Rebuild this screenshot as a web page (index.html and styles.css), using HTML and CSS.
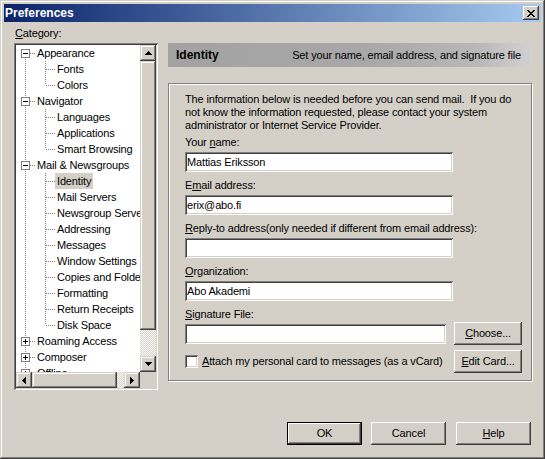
FILE: index.html
```html
<!DOCTYPE html>
<html>
<head>
<meta charset="utf-8">
<title>Preferences</title>
<link rel="stylesheet" href="styles.css">
</head>
<body>
<div class="window">
  <div class="titlebar">
    <span class="title">Preferences</span>
    <button class="close" aria-label="Close">
      <svg width="8" height="7" viewBox="0 0 8 7" shape-rendering="crispEdges"><path d="M0 0h2v1h-2zM6 0h2v1h-2zM1 1h2v1h-2zM5 1h2v1h-2zM2 2h4v1h-4zM3 3h2v1h-2zM2 4h4v1h-4zM1 5h2v1h-2zM5 5h2v1h-2zM0 6h2v1h-2zM6 6h2v1h-2z" fill="#000"/></svg>
    </button>
  </div>

  <div class="main">
    <div class="left">
      <div class="cat"><u>C</u>ategory:</div>
      <div class="tree">
        <div class="list">
          <div class="row first"><span class="g g-box"><span class="box minus"></span></span><span class="lbl">Appearance</span></div>
          <div class="row"><span class="g g-v"></span><span class="g g-t"></span><span class="lbl">Fonts</span></div>
          <div class="row"><span class="g g-v"></span><span class="g g-l"></span><span class="lbl">Colors</span></div>
          <div class="row"><span class="g g-box"><span class="box minus"></span></span><span class="lbl">Navigator</span></div>
          <div class="row"><span class="g g-v"></span><span class="g g-t"></span><span class="lbl">Languages</span></div>
          <div class="row"><span class="g g-v"></span><span class="g g-t"></span><span class="lbl">Applications</span></div>
          <div class="row"><span class="g g-v"></span><span class="g g-l"></span><span class="lbl">Smart Browsing</span></div>
          <div class="row"><span class="g g-box"><span class="box minus"></span></span><span class="lbl">Mail &amp; Newsgroups</span></div>
          <div class="row"><span class="g g-v"></span><span class="g g-t"></span><span class="lbl sel">Identity</span></div>
          <div class="row"><span class="g g-v"></span><span class="g g-t"></span><span class="lbl">Mail Servers</span></div>
          <div class="row"><span class="g g-v"></span><span class="g g-t"></span><span class="lbl">Newsgroup Servers</span></div>
          <div class="row"><span class="g g-v"></span><span class="g g-t"></span><span class="lbl">Addressing</span></div>
          <div class="row"><span class="g g-v"></span><span class="g g-t"></span><span class="lbl">Messages</span></div>
          <div class="row"><span class="g g-v"></span><span class="g g-t"></span><span class="lbl">Window Settings</span></div>
          <div class="row"><span class="g g-v"></span><span class="g g-t"></span><span class="lbl">Copies and Folders</span></div>
          <div class="row"><span class="g g-v"></span><span class="g g-t"></span><span class="lbl">Formatting</span></div>
          <div class="row"><span class="g g-v"></span><span class="g g-t"></span><span class="lbl">Return Receipts</span></div>
          <div class="row"><span class="g g-v"></span><span class="g g-l"></span><span class="lbl">Disk Space</span></div>
          <div class="row"><span class="g g-box"><span class="box plus"></span></span><span class="lbl">Roaming Access</span></div>
          <div class="row"><span class="g g-box"><span class="box plus"></span></span><span class="lbl">Composer</span></div>
          <div class="row"><span class="g g-box"><span class="box plus"></span></span><span class="lbl">Offline</span></div>
        </div>
        <div class="vscroll">
          <span class="sbtn"><svg width="7" height="4" viewBox="0 0 7 4" shape-rendering="crispEdges"><path d="M3 0h1v1h-1zM2 1h3v1h-3zM1 2h5v1h-5zM0 3h7v1h-7z" fill="#000"/></svg></span>
          <span class="vthumb"></span>
          <span class="vtrack"></span>
          <span class="sbtn"><svg width="7" height="4" viewBox="0 0 7 4" shape-rendering="crispEdges"><path d="M0 0h7v1h-7zM1 1h5v1h-5zM2 2h3v1h-3zM3 3h1v1h-1z" fill="#000"/></svg></span>
        </div>
        <div class="hscroll">
          <span class="sbtn"><svg width="4" height="7" viewBox="0 0 4 7" shape-rendering="crispEdges"><path d="M3 0h1v7h-1zM2 1h1v5h-1zM1 2h1v3h-1zM0 3h1v1h-1z" fill="#000"/></svg></span>
          <span class="hthumb"></span>
          <span class="htrack"></span>
          <span class="sbtn"><svg width="4" height="7" viewBox="0 0 4 7" shape-rendering="crispEdges"><path d="M0 0h1v7h-1zM1 1h1v5h-1zM2 2h1v3h-1zM3 3h1v1h-1z" fill="#000"/></svg></span>
        </div>
        <div class="corner"></div>
      </div>
    </div>

    <div class="right">
      <div class="banner">
        <span class="banner-title">Identity</span>
        <span class="banner-desc">Set your name, email address, and signature file</span>
      </div>
      <div class="group">
        <p class="intro">The information below is needed before you can send mail.&nbsp; If you do<br>not know the information requested, please contact your system<br>administrator or Internet Service Provider.</p>
        <div class="field field-first">
          <label class="flabel">Your <u>n</u>ame:</label>
          <input class="text" type="text" value="Mattias Eriksson">
        </div>
        <div class="field">
          <label class="flabel">E<u>m</u>ail address:</label>
          <input class="text" type="text" value="erix@abo.fi">
        </div>
        <div class="field">
          <label class="flabel"><u>R</u>eply-to address(only needed if different from email address):</label>
          <input class="text" type="text" value="">
        </div>
        <div class="field">
          <label class="flabel"><u>O</u>rganization:</label>
          <input class="text" type="text" value="Abo Akademi">
        </div>
        <div class="field">
          <label class="flabel"><u>S</u>ignature File:</label>
          <div class="sigrow">
            <input class="text sig" type="text" value="">
            <button class="btn small"><u>C</u>hoose...</button>
          </div>
        </div>
        <div class="checkrow">
          <label class="checklabel"><span class="check"></span><span><u>A</u>ttach my personal card to messages (as a vCard)</span></label>
          <button class="btn small"><u>E</u>dit Card...</button>
        </div>
      </div>
    </div>
  </div>

  <div class="footer">
    <button class="btn wide default">OK</button>
    <button class="btn wide">Cancel</button>
    <button class="btn wide help"><u>H</u>elp</button>
  </div>
</div>
</body>
</html>
```

FILE: styles.css
```css
* { box-sizing: border-box; }
html, body { margin: 0; padding: 0; }
body {
  background: #d4d0c8;
  font: 11px/13px "Liberation Sans", Arial, sans-serif;
  letter-spacing: -0.15px;
  color: #000;
}
u { text-decoration: underline; text-underline-offset: 1px; }

.window {
  width: 545px;
  height: 459px;
  padding: 4px;
  background: #d4d0c8;
  box-shadow: inset -1px -1px #404040, inset 1px 1px #d4d0c8, inset -2px -2px #808080, inset 2px 2px #fff;
  display: flex;
  flex-direction: column;
}

.titlebar {
  height: 18px;
  flex: none;
  display: flex;
  align-items: center;
  justify-content: space-between;
  padding: 0 2px 0 1px;
  background: linear-gradient(to right, #0a246a, #a6caf0);
}
.title { color: #fff; font-weight: bold; font-size: 12px; line-height: 14px; letter-spacing: 0; }
.close {
  width: 16px;
  height: 14px;
  padding: 0;
  border: 0;
  margin: 0;
  background: #d4d0c8;
  box-shadow: inset -1px -1px #404040, inset 1px 1px #fff, inset -2px -2px #808080;
  display: flex;
  align-items: center;
  justify-content: center;
}

.main {
  display: flex;
  align-items: flex-start;
  padding: 5px 9px 0 10px;
  flex: none;
}
.left { width: 144px; flex: none; }
.cat { line-height: 13px; margin: 0 0 3px 1px; }

.tree {
  height: 347px;
  padding: 2px;
  background: #fff;
  box-shadow: inset 1px 1px #808080, inset -1px -1px #fff, inset 2px 2px #404040, inset -2px -2px #d4d0c8;
  display: grid;
  grid-template-columns: 1fr 16px;
  grid-template-rows: 1fr 16px;
}
.list { overflow: hidden; background: #fff; }
.row { display: flex; height: 16px; white-space: nowrap; }
.lbl { margin-left: -1px; padding: 0 2px; line-height: 16px; height: 16px; }
.lbl.sel { background: #d4d0c8; }

.g {
  display: block;
  width: 20px;
  height: 16px;
  flex: none;
  background-repeat: no-repeat;
}
.g-v {
  background-image: repeating-linear-gradient(to bottom, #808080 0 1px, transparent 1px 2px);
  background-position: 9px 0;
  background-size: 1px 16px;
}
.g-t {
  background-image: repeating-linear-gradient(to bottom, #808080 0 1px, transparent 1px 2px),
                    repeating-linear-gradient(to right, #808080 0 1px, transparent 1px 2px);
  background-position: 9px 0, 10px 8px;
  background-size: 1px 16px, 9px 1px;
}
.g-l {
  background-image: repeating-linear-gradient(to bottom, #808080 0 1px, transparent 1px 2px),
                    repeating-linear-gradient(to right, #808080 0 1px, transparent 1px 2px);
  background-position: 9px 0, 10px 8px;
  background-size: 1px 8px, 9px 1px;
}
.g-box {
  padding: 4px 0 0 5px;
  background-image: repeating-linear-gradient(to bottom, #808080 0 1px, transparent 1px 2px),
                    repeating-linear-gradient(to bottom, #808080 0 1px, transparent 1px 2px),
                    repeating-linear-gradient(to right, #808080 0 1px, transparent 1px 2px);
  background-position: 9px 0, 9px 14px, 14px 8px;
  background-size: 1px 4px, 1px 2px, 5px 1px;
}
.first .g-box {
  background-image: repeating-linear-gradient(to bottom, #808080 0 1px, transparent 1px 2px),
                    repeating-linear-gradient(to right, #808080 0 1px, transparent 1px 2px);
  background-position: 9px 14px, 14px 8px;
  background-size: 1px 2px, 5px 1px;
}
.box {
  display: block;
  width: 9px;
  height: 9px;
  border: 1px solid #808080;
  background-color: #fff;
  background-repeat: no-repeat;
}
.box.minus {
  background-image: linear-gradient(#000, #000);
  background-position: 1px 3px;
  background-size: 5px 1px;
}
.box.plus {
  background-image: linear-gradient(#000, #000), linear-gradient(#000, #000);
  background-position: 1px 3px, 3px 1px;
  background-size: 5px 1px, 1px 5px;
}

.vscroll, .hscroll {
  display: flex;
  background: conic-gradient(#fff 25%, #d4d0c8 0 50%, #fff 0 75%, #d4d0c8 0) 0 0 / 2px 2px;
}
.vscroll { flex-direction: column; }
.sbtn, .vthumb, .hthumb {
  background: #d4d0c8;
  box-shadow: inset -1px -1px #404040, inset 1px 1px #d4d0c8, inset -2px -2px #808080, inset 2px 2px #fff;
}
.sbtn {
  width: 16px;
  height: 16px;
  flex: none;
  display: flex;
  align-items: center;
  justify-content: center;
}
.sbtn svg { display: block; }
.vthumb { height: 269px; flex: none; }
.vtrack, .htrack { flex: 1; }
.hthumb { width: 85px; flex: none; }
.corner { background: #d4d0c8; }

.right { width: 364px; margin-left: 10px; margin-top: 16px; flex: none; }
.banner {
  height: 24px;
  display: flex;
  align-items: center;
  justify-content: space-between;
  padding: 0 11px 0 8px;
  background: linear-gradient(to right, #a2a2a2 0%, #a8a8a8 55%, #b8b8b8 85%, #d2d2d2 100%);
}
.banner-title { font-weight: bold; font-size: 12px; letter-spacing: 0; }

.group {
  margin-top: 16px;
  height: 298px;
  border: 1px solid #808080;
  box-shadow: inset 1px 1px #fff, 1px 1px #fff;
  padding: 9px 9px 0 16px;
}
.intro { margin: 0; line-height: 13px; white-space: nowrap; }
.field { margin-top: 7px; }
.field-first { margin-top: 4px; }
.flabel { display: block; line-height: 13px; margin-bottom: 3px; white-space: nowrap; }
.text {
  display: block;
  width: 268px;
  height: 20px;
  margin: 0;
  border: 0;
  outline: none;
  padding: 0 2px 0 2px;
  background: #fff;
  font: 11px "Liberation Sans", Arial, sans-serif;
  letter-spacing: -0.15px;
  color: #000;
  box-shadow: inset 1px 1px #808080, inset -1px -1px #fff, inset 2px 2px #404040, inset -2px -2px #d4d0c8;
}
.sigrow {
  display: flex;
  align-items: center;
  justify-content: space-between;
  margin-top: -2px;
}
.text.sig { width: 261px; }

.btn {
  margin: 0;
  padding: 0;
  border: 0;
  background: #d4d0c8;
  font: 11px/13px "Liberation Sans", Arial, sans-serif;
  letter-spacing: -0.15px;
  color: #000;
  box-shadow: inset -1px -1px #404040, inset 1px 1px #fff, inset -2px -2px #808080;
  text-align: center;
}
.btn.small { width: 68px; height: 23px; flex: none; }
.btn.wide { width: 75px; height: 23px; flex: none; }
.btn.default {
  box-shadow: inset 0 0 0 1px #000, inset -2px -2px #404040, inset 2px 2px #fff, inset -3px -3px #808080;
}

.checkrow {
  margin-top: 5px;
  display: flex;
  align-items: center;
  justify-content: space-between;
}
.checklabel { display: flex; align-items: center; gap: 4px; white-space: nowrap; }
.check {
  display: block;
  width: 13px;
  height: 13px;
  background: #fff;
  box-shadow: inset 1px 1px #808080, inset -1px -1px #fff, inset 2px 2px #404040, inset -2px -2px #d4d0c8;
}

.footer {
  display: flex;
  justify-content: flex-end;
  gap: 9px;
  margin-top: 32px;
  padding-right: 10px;
  flex: none;
}
.btn.help { margin-left: 1px; }
```
